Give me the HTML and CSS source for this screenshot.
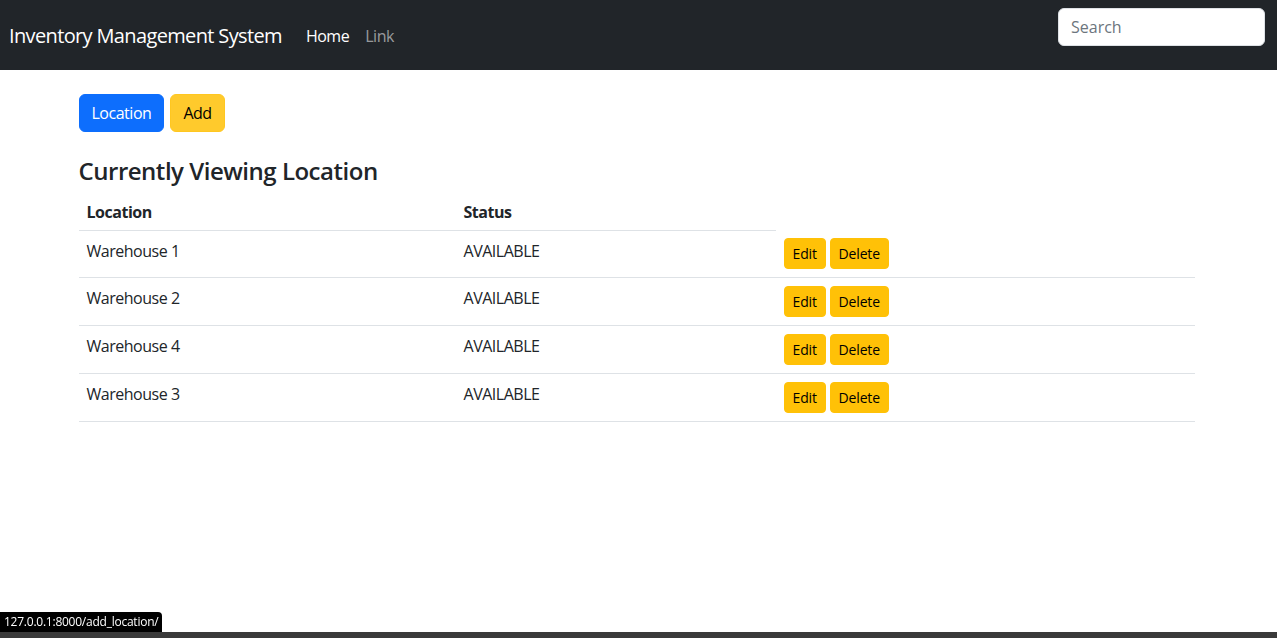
FILE: index.html
```html
<!DOCTYPE html>
<html lang="en">
<head>
<meta charset="utf-8">
<title>Inventory Management System</title>
<link rel="stylesheet" href="styles.css">
</head>
<body>
<nav class="navbar">
  <a class="brand" href="#">Inventory Management System</a>
  <ul class="nav">
    <li><a class="nav-link active" href="#">Home</a></li>
    <li><a class="nav-link" href="#">Link</a></li>
  </ul>
  <form class="search">
    <input class="search-input" type="search" placeholder="Search">
  </form>
</nav>
<main class="container">
  <div class="actions">
    <a class="btn btn-primary" href="#">Location</a>
    <a class="btn btn-warning" href="#">Add</a>
  </div>
  <h4 class="title">Currently Viewing Location</h4>
  <table class="table">
    <thead>
      <tr><th class="col-loc">Location</th><th class="col-status">Status</th></tr>
    </thead>
    <tbody>
      <tr><td>Warehouse 1</td><td>AVAILABLE</td><td><a class="btn btn-sm btn-warning" href="#">Edit</a> <a class="btn btn-sm btn-warning" href="#">Delete</a></td></tr>
      <tr><td>Warehouse 2</td><td>AVAILABLE</td><td><a class="btn btn-sm btn-warning" href="#">Edit</a> <a class="btn btn-sm btn-warning" href="#">Delete</a></td></tr>
      <tr><td>Warehouse 4</td><td>AVAILABLE</td><td><a class="btn btn-sm btn-warning" href="#">Edit</a> <a class="btn btn-sm btn-warning" href="#">Delete</a></td></tr>
      <tr><td>Warehouse 3</td><td>AVAILABLE</td><td><a class="btn btn-sm btn-warning" href="#">Edit</a> <a class="btn btn-sm btn-warning" href="#">Delete</a></td></tr>
    </tbody>
  </table>
</main>
<div class="status-bubble">127.0.0.1:8000/add_location/</div>
<div class="bottom-bar"></div>
</body>
</html>
```
FILE: styles.css
```css
* { box-sizing: border-box; }
html, body { margin: 0; padding: 0; }
body {
  font-family: "Open Sans", "Noto Sans", "Liberation Sans", sans-serif;
  font-size: 16px;
  line-height: 1.5;
  letter-spacing: -0.03em;
  color: #212529;
  background: #fff;
}
a { text-decoration: none; }

.navbar {
  height: 70px;
  background: #212529;
  display: flex;
  align-items: center;
  padding: 2px 12px 0 9px;
}
.brand {
  color: #fff;
  font-size: 20px;
  line-height: 30px;
  letter-spacing: -0.032em;
  margin-right: 16px;
  white-space: nowrap;
}
.nav {
  list-style: none;
  margin: 0;
  padding: 0;
  display: flex;
}
.nav-link {
  display: block;
  padding: 8px;
  color: rgba(255,255,255,.55);
}
.nav-link.active { color: #fff; }
.search {
  margin-left: auto;
  align-self: flex-start;
  margin-top: 6px;
}
.search-input {
  width: 207px;
  height: 38px;
  padding: 6px 12px;
  font: inherit;
  font-size: 16px;
  color: #212529;
  background: #fff;
  border: 1px solid #dee2e6;
  border-radius: 6px;
  outline: none;
}
.search-input::placeholder { color: #6c757d; }

.container {
  max-width: 1140px;
  margin-left: max(0px, calc(50% - 572px));
  padding: 24px 12px 0;
}
.actions { display: flex; gap: 6px; }
.btn {
  display: inline-block;
  padding: 6px 12px;
  font-size: 16px;
  line-height: 24px;
  border: 1px solid transparent;
  border-radius: 6px;
  color: #000;
}
.btn-primary { background: #0d6efd; border-color: #0d6efd; color: #fff; }
.btn-warning { background: #ffc107; border-color: #ffc107; color: #000; }
.actions .btn-warning { background: #ffca2c; border-color: #ffc720; }
.btn-sm {
  padding: 4px 8px;
  font-size: 14px;
  line-height: 21px;
  letter-spacing: -0.01em;
  border-radius: 4px;
}
.title {
  font-size: 24px;
  font-weight: 600;
  line-height: 1.2;
  margin: 25px 0 4px;
}
.table {
  width: 100%;
  border-collapse: collapse;
  margin-bottom: 16px;
}
.table th, .table td {
  padding: 8px;
  text-align: left;
  vertical-align: top;
  border-bottom: 1px solid #dee2e6;
}
.table th { font-weight: 700; padding: 10px 8px 6px; }
.col-loc { width: 377px; }
.col-status { width: 320px; }

.status-bubble {
  position: fixed;
  left: 0;
  bottom: 6px;
  height: 20px;
  padding: 0 4px;
  background: #000;
  color: #fff;
  font-size: 12px;
  line-height: 20px;
  letter-spacing: -0.02em;
  border-top-right-radius: 4px;
}
.bottom-bar {
  position: fixed;
  left: 0;
  right: 0;
  bottom: 0;
  height: 6px;
  background: #3a3a3a;
}
```
